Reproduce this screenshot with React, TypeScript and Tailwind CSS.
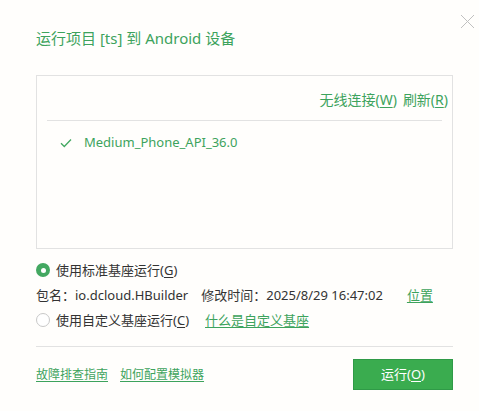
import React from "react"

const font = { fontFamily: '"Noto Sans", "Noto Sans CJK SC", sans-serif' }

function Radio({ checked }: { checked: boolean }) {
  if (checked) {
    return (
      <span className="flex h-[14px] w-[14px] shrink-0 items-center justify-center rounded-full bg-[#43a861]">
        <span className="h-[5px] w-[5px] rounded-full bg-white" />
      </span>
    )
  }
  return <span className="h-[14px] w-[14px] shrink-0 rounded-full border border-[#c8c8c8] bg-white" />
}

export default function App() {
  return (
    <div
      className="relative h-[411px] w-[479px] overflow-hidden bg-[#fffefc] text-[13px] text-[#333]"
      style={font}
    >
      {/* close */}
      <button className="absolute right-[4px] top-[14px] text-[#c0c0c0]">
        <svg width="15" height="15" viewBox="0 0 15 15" fill="none" stroke="currentColor" strokeWidth="1">
          <path d="M1 1L14 14M14 1L1 14" />
        </svg>
      </button>

      <div className="px-[36px] pt-[27px] pr-[26px]">
        <h1 className="text-[15px] leading-[22px] text-[#3da35d]">运行项目 [ts] 到 Android 设备</h1>

        {/* device box */}
        <div className="mt-[26px] h-[174px] border border-[#e2e2e2] bg-[#fffefc]">
          <div className="flex h-[44px] items-end justify-end gap-[6px] pb-[10px] pr-[4px] text-[14px] text-[#3da35d]">
            <span>
              无线连接(<span className="underline underline-offset-2">W</span>)
            </span>
            <span>
              刷新(<span className="underline underline-offset-2">R</span>)
            </span>
          </div>
          <div className="mx-[10px] border-t border-[#e2e2e2]" />
          <div className="flex items-center gap-[12px] pl-[23px] pt-[12px] text-[#3da35d]">
            <svg width="12" height="10" viewBox="0 0 12 10" fill="none" stroke="#43a861" strokeWidth="1.3">
              <path d="M1 5.2L4.3 8.5L11 1.5" />
            </svg>
            <span className="text-[13px]">Medium_Phone_API_36.0</span>
          </div>
        </div>

        {/* options */}
        <div className="mt-[12px] flex items-center gap-[6px] leading-[18px]">
          <Radio checked />
          <span>
            使用标准基座运行(<span className="underline underline-offset-2">G</span>)
          </span>
        </div>
        <div className="mt-[7px] flex items-center leading-[18px]">
          <span>包名：io.dcloud.HBuilder</span>
          <span className="ml-[13px]">修改时间：2025/8/29 16:47:02</span>
          <span className="ml-[24px] text-[#3da35d] underline underline-offset-2">位置</span>
        </div>
        <div className="mt-[7px] flex items-center leading-[18px]">
          <span className="flex items-center gap-[6px]">
            <Radio checked={false} />
            <span>
              使用自定义基座运行(<span className="underline underline-offset-2">C</span>)
            </span>
          </span>
          <span className="ml-[16px] text-[#3da35d] underline underline-offset-2">什么是自定义基座</span>
        </div>

        <div className="mt-[17px] border-t border-[#e2e2e2]" />

        {/* footer */}
        <div className="mt-[12px] flex items-center justify-between">
          <div className="flex gap-[12px] text-[12px] text-[#3da35d]">
            <span className="underline underline-offset-2">故障排查指南</span>
            <span className="underline underline-offset-2">如何配置模拟器</span>
          </div>
          <button className="flex h-[31px] w-[100px] items-center justify-center border border-[#2f9a47] bg-[#3aac4f] text-white">
            运行(<span className="underline underline-offset-2">O</span>)
          </button>
        </div>
      </div>
    </div>
  )
}
